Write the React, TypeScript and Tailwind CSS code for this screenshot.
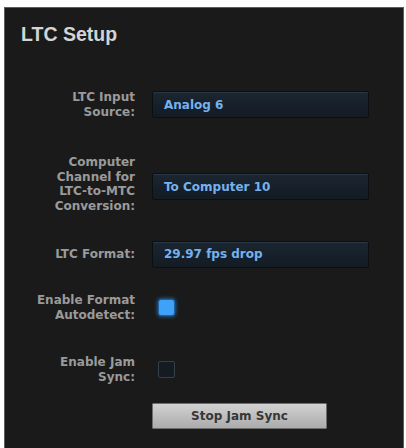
import React from 'react';

type Field = {
  label: string[];
  value?: string;
};

const font = { fontFamily: '"Liberation Sans", Arial, sans-serif' };
const uiFont = { fontFamily: '"DejaVu Sans", Verdana, sans-serif' };

const Label = ({ lines }: { lines: string[] }) => (
  <div
    className="w-[130px] shrink-0 text-right text-[12px] font-bold leading-[14.5px] text-[#9a9a9a]"
    style={uiFont}
  >
    {lines.map((line) => (
      <div key={line}>{line}</div>
    ))}
  </div>
);

const SelectBox = ({ value }: { value: string }) => (
  <div
    className="ml-[17px] flex h-[27px] w-[217px] items-center rounded-[2px] border border-[#0b0f13] bg-gradient-to-b from-[#1b2632] to-[#131b23] pl-[11px] text-[12px] font-bold text-[#74b2ee] shadow-[inset_0_1px_0_#2a3846]"
    style={uiFont}
  >
    {value}
  </div>
);

const Checkbox = ({ checked }: { checked: boolean }) =>
  checked ? (
    <div className="ml-[23px] h-[17px] w-[17px] rounded-[3px] border border-[#1f5f9c] bg-[#3ea3f8] shadow-[0_0_4px_#2b7fd0]" />
  ) : (
    <div className="ml-[23px] h-[17px] w-[17px] rounded-[2px] border border-[#33414d] bg-[#161b21]" />
  );

export default function App() {
  const input: Field = { label: ['LTC Input', 'Source:'], value: 'Analog 6' };
  const channel: Field = {
    label: ['Computer', 'Channel for', 'LTC-to-MTC', 'Conversion:'],
    value: 'To Computer 10',
  };
  const format: Field = { label: ['LTC Format:'], value: '29.97 fps drop' };

  return (
    <div className="h-[448px] w-[406px] overflow-hidden bg-white pl-[4px] pt-[7px]" style={font}>
      <div className="h-[460px] w-[400px] border border-[#5c5c5c] bg-[#1a1a1a] pt-[15px]">
        {/* Title */}
        <h1 className="pl-[16px] text-[19.5px] font-bold leading-[22px] text-[#d4d4d4]">LTC Setup</h1>

        {/* Rows */}
        <div className="mt-[45px] flex h-[29px] items-center">
          <Label lines={input.label} />
          <SelectBox value={input.value!} />
        </div>

        <div className="mt-[36px] flex h-[58px] items-center">
          <Label lines={channel.label} />
          <div className="mt-[5px]">
            <SelectBox value={channel.value!} />
          </div>
        </div>

        <div className="mt-[27px] flex h-[28px] items-center">
          <Label lines={format.label} />
          <SelectBox value={format.value!} />
        </div>

        <div className="mt-[25px] flex h-[29px] items-center">
          <Label lines={['Enable Format', 'Autodetect:']} />
          <Checkbox checked />
        </div>

        <div className="mt-[33px] flex h-[29px] items-center">
          <Label lines={['Enable Jam', 'Sync:']} />
          <Checkbox checked={false} />
        </div>

        <div className="mt-[19px] flex">
          <button
            className="ml-[147px] h-[26px] w-[175px] rounded-[1px] border border-[#6e6e6e] bg-gradient-to-b from-[#d2d2d2] to-[#ababab] text-[12px] font-bold text-[#363636]"
            style={uiFont}
          >
            Stop Jam Sync
          </button>
        </div>
      </div>
    </div>
  );
}
